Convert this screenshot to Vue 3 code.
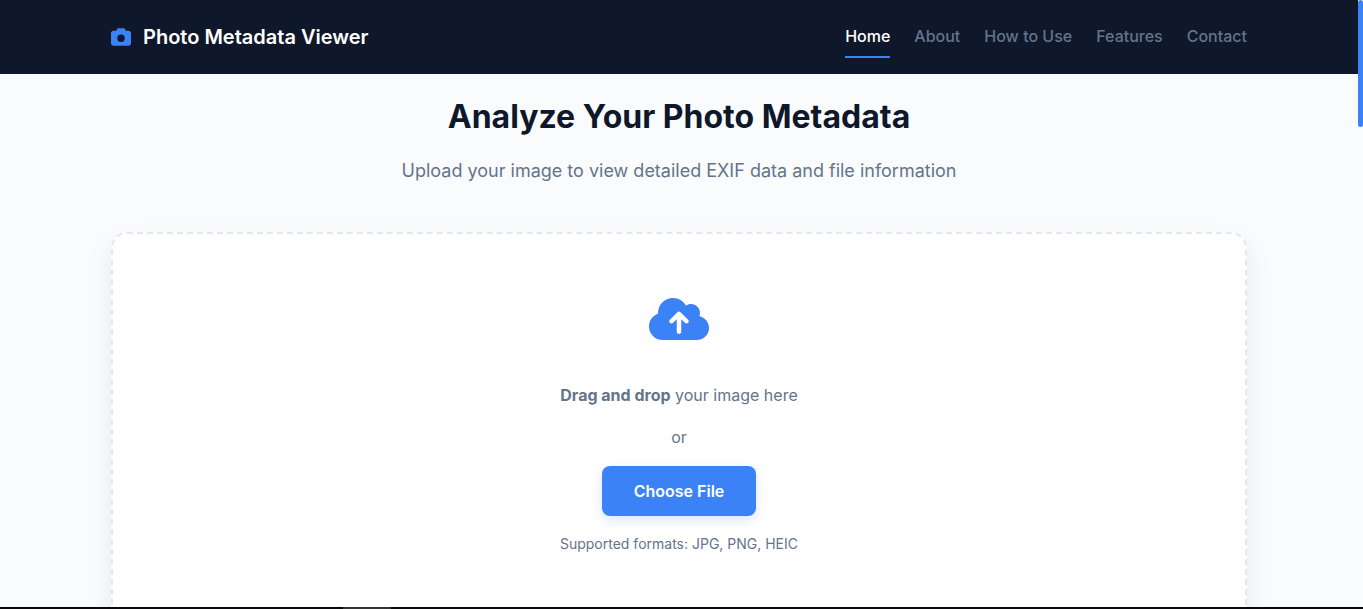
<script setup>
import { ref } from 'vue'

const links = ['Home', 'About', 'How to Use', 'Features', 'Contact']
const active = ref('Home')
const slug = (name) => '#' + name.toLowerCase().replaceAll(' ', '-')
const picker = ref(null)
</script>

<template>
  <div class="shell">
    <div class="view">
      <div class="page">
        <header class="header">
          <div class="container bar">
            <a class="brand" href="#home">
              <svg class="brand-icon" viewBox="0 0 512 512" aria-hidden="true">
                <path fill="currentColor" d="M149.1 64.8L138.7 96H64C28.7 96 0 124.7 0 160V416c0 35.3 28.7 64 64 64H448c35.3 0 64-28.7 64-64V160c0-35.3-28.7-64-64-64H373.3L362.9 64.8C356.4 45.2 338.1 32 317.4 32H194.6c-20.7 0-39 13.2-45.5 32.8zM256 192a96 96 0 1 1 0 192 96 96 0 1 1 0-192z" />
              </svg>
              <span>Photo Metadata Viewer</span>
            </a>
            <nav class="nav" aria-label="Main">
              <a
                v-for="name in links"
                :key="name"
                :href="slug(name)"
                class="link"
                :class="{ active: name === active }"
                @click="active = name"
              >{{ name }}</a>
            </nav>
          </div>
        </header>

        <main class="container main">
          <h1 class="title">Analyze Your Photo Metadata</h1>
          <p class="subtitle">Upload your image to view detailed EXIF data and file information</p>

          <section class="drop">
            <svg class="cloud" viewBox="0 0 640 512" aria-hidden="true">
              <path fill="currentColor" d="M144 480C64.5 480 0 415.5 0 336c0-62.8 40.2-116.2 96.2-135.9c-.1-2.7-.2-5.4-.2-8.1c0-88.4 71.6-160 160-160c59.3 0 111 32.2 138.7 80.2C409.9 102 428.3 96 448 96c53 0 96 43 96 96c0 12.2-2.3 23.8-6.4 34.6C596 238.4 640 290.1 640 352c0 70.7-57.3 128-128 128H144zm79-217c-9.4 9.4-9.4 24.6 0 33.9s24.6 9.4 33.9 0l39-39V392c0 13.3 10.7 24 24 24s24-10.7 24-24V257.9l39 39c9.4 9.4 24.6 9.4 33.9 0s9.4-24.6 0-33.9l-80-80c-9.4-9.4-24.6-9.4-33.9 0l-80 80z" />
            </svg>
            <p class="hint"><strong>Drag and drop</strong> your image here</p>
            <p class="hint">or</p>
            <button class="choose" type="button" @click="picker.click()">Choose File</button>
            <input ref="picker" type="file" accept="image/*" aria-label="Choose File" hidden />
            <p class="formats">Supported formats: JPG, PNG, HEIC</p>
          </section>
        </main>
      </div>
      <div class="track"><div class="thumb"></div></div>
    </div>
    <div class="edge"><div class="edge-mark"></div></div>
  </div>
</template>

<style>
body {
  margin: 0;
}
</style>

<style scoped>
.shell {
  display: flex;
  flex-direction: column;
  height: 100vh;
  overflow: hidden;
  background: #fafbfd;
  color: #64748b;
  font-family: Inter, "Liberation Sans", sans-serif;
  font-size: 16px;
  line-height: 26px;
}
.view {
  display: flex;
  flex: 1;
  min-height: 0;
}
.page {
  flex: 1;
  min-width: 0;
  overflow: hidden;
}
.container {
  box-sizing: border-box;
  max-width: 1200px;
  margin: 0 auto;
  padding: 0 32px;
}
.header {
  padding: 16px 0;
  background: #0f172a;
}
.bar {
  display: flex;
  align-items: center;
  justify-content: space-between;
}
.brand {
  display: flex;
  align-items: center;
  gap: 12px;
  color: #fff;
  font-size: 20px;
  font-weight: 600;
  text-decoration: none;
}
.brand-icon {
  width: 20px;
  height: 20px;
  color: #3b82f6;
}
.nav {
  display: flex;
  gap: 24px;
}
.link {
  padding: 7px 0;
  border-bottom: 2px solid transparent;
  color: #64748b;
  font-weight: 500;
  text-decoration: none;
}
.link.active {
  border-color: #3b82f6;
  color: #fff;
}
.title {
  margin: 0;
  padding-top: 16px;
  color: #0f172a;
  font-size: 32px;
  font-weight: 700;
  line-height: 54px;
  text-align: center;
}
.subtitle {
  margin: 12px 0 46px;
  font-size: 18px;
  line-height: 30px;
  text-align: center;
}
.drop {
  display: flex;
  flex-direction: column;
  align-items: center;
  padding: 61px 32px 64px;
  border: 2px dashed #e2e8f0;
  border-radius: 16px;
  background: #fff;
  box-shadow: 0 10px 24px rgba(0, 0, 0, 0.08);
}
.cloud {
  width: 60px;
  height: 48px;
  margin-bottom: 39px;
  color: #3b82f6;
}
.hint {
  margin: 0 0 16px;
}
.choose {
  padding: 12px 32px;
  border: 0;
  border-radius: 8px;
  background: #3b82f6;
  box-shadow: 0 4px 12px rgba(59, 130, 246, 0.2);
  color: #fff;
  font: inherit;
  font-weight: 600;
  cursor: pointer;
}
.formats {
  margin: 16px 0 0;
  font-size: 14px;
  line-height: 24px;
}
.track {
  width: 5px;
  background: #fafbfd;
}
.thumb {
  height: 127px;
  border-radius: 4px;
  background: #3b82f6;
}
.edge {
  height: 2px;
  background: #09090b;
}
.edge-mark {
  width: 48px;
  height: 2px;
  margin-left: 343px;
  background: #333;
}
</style>
